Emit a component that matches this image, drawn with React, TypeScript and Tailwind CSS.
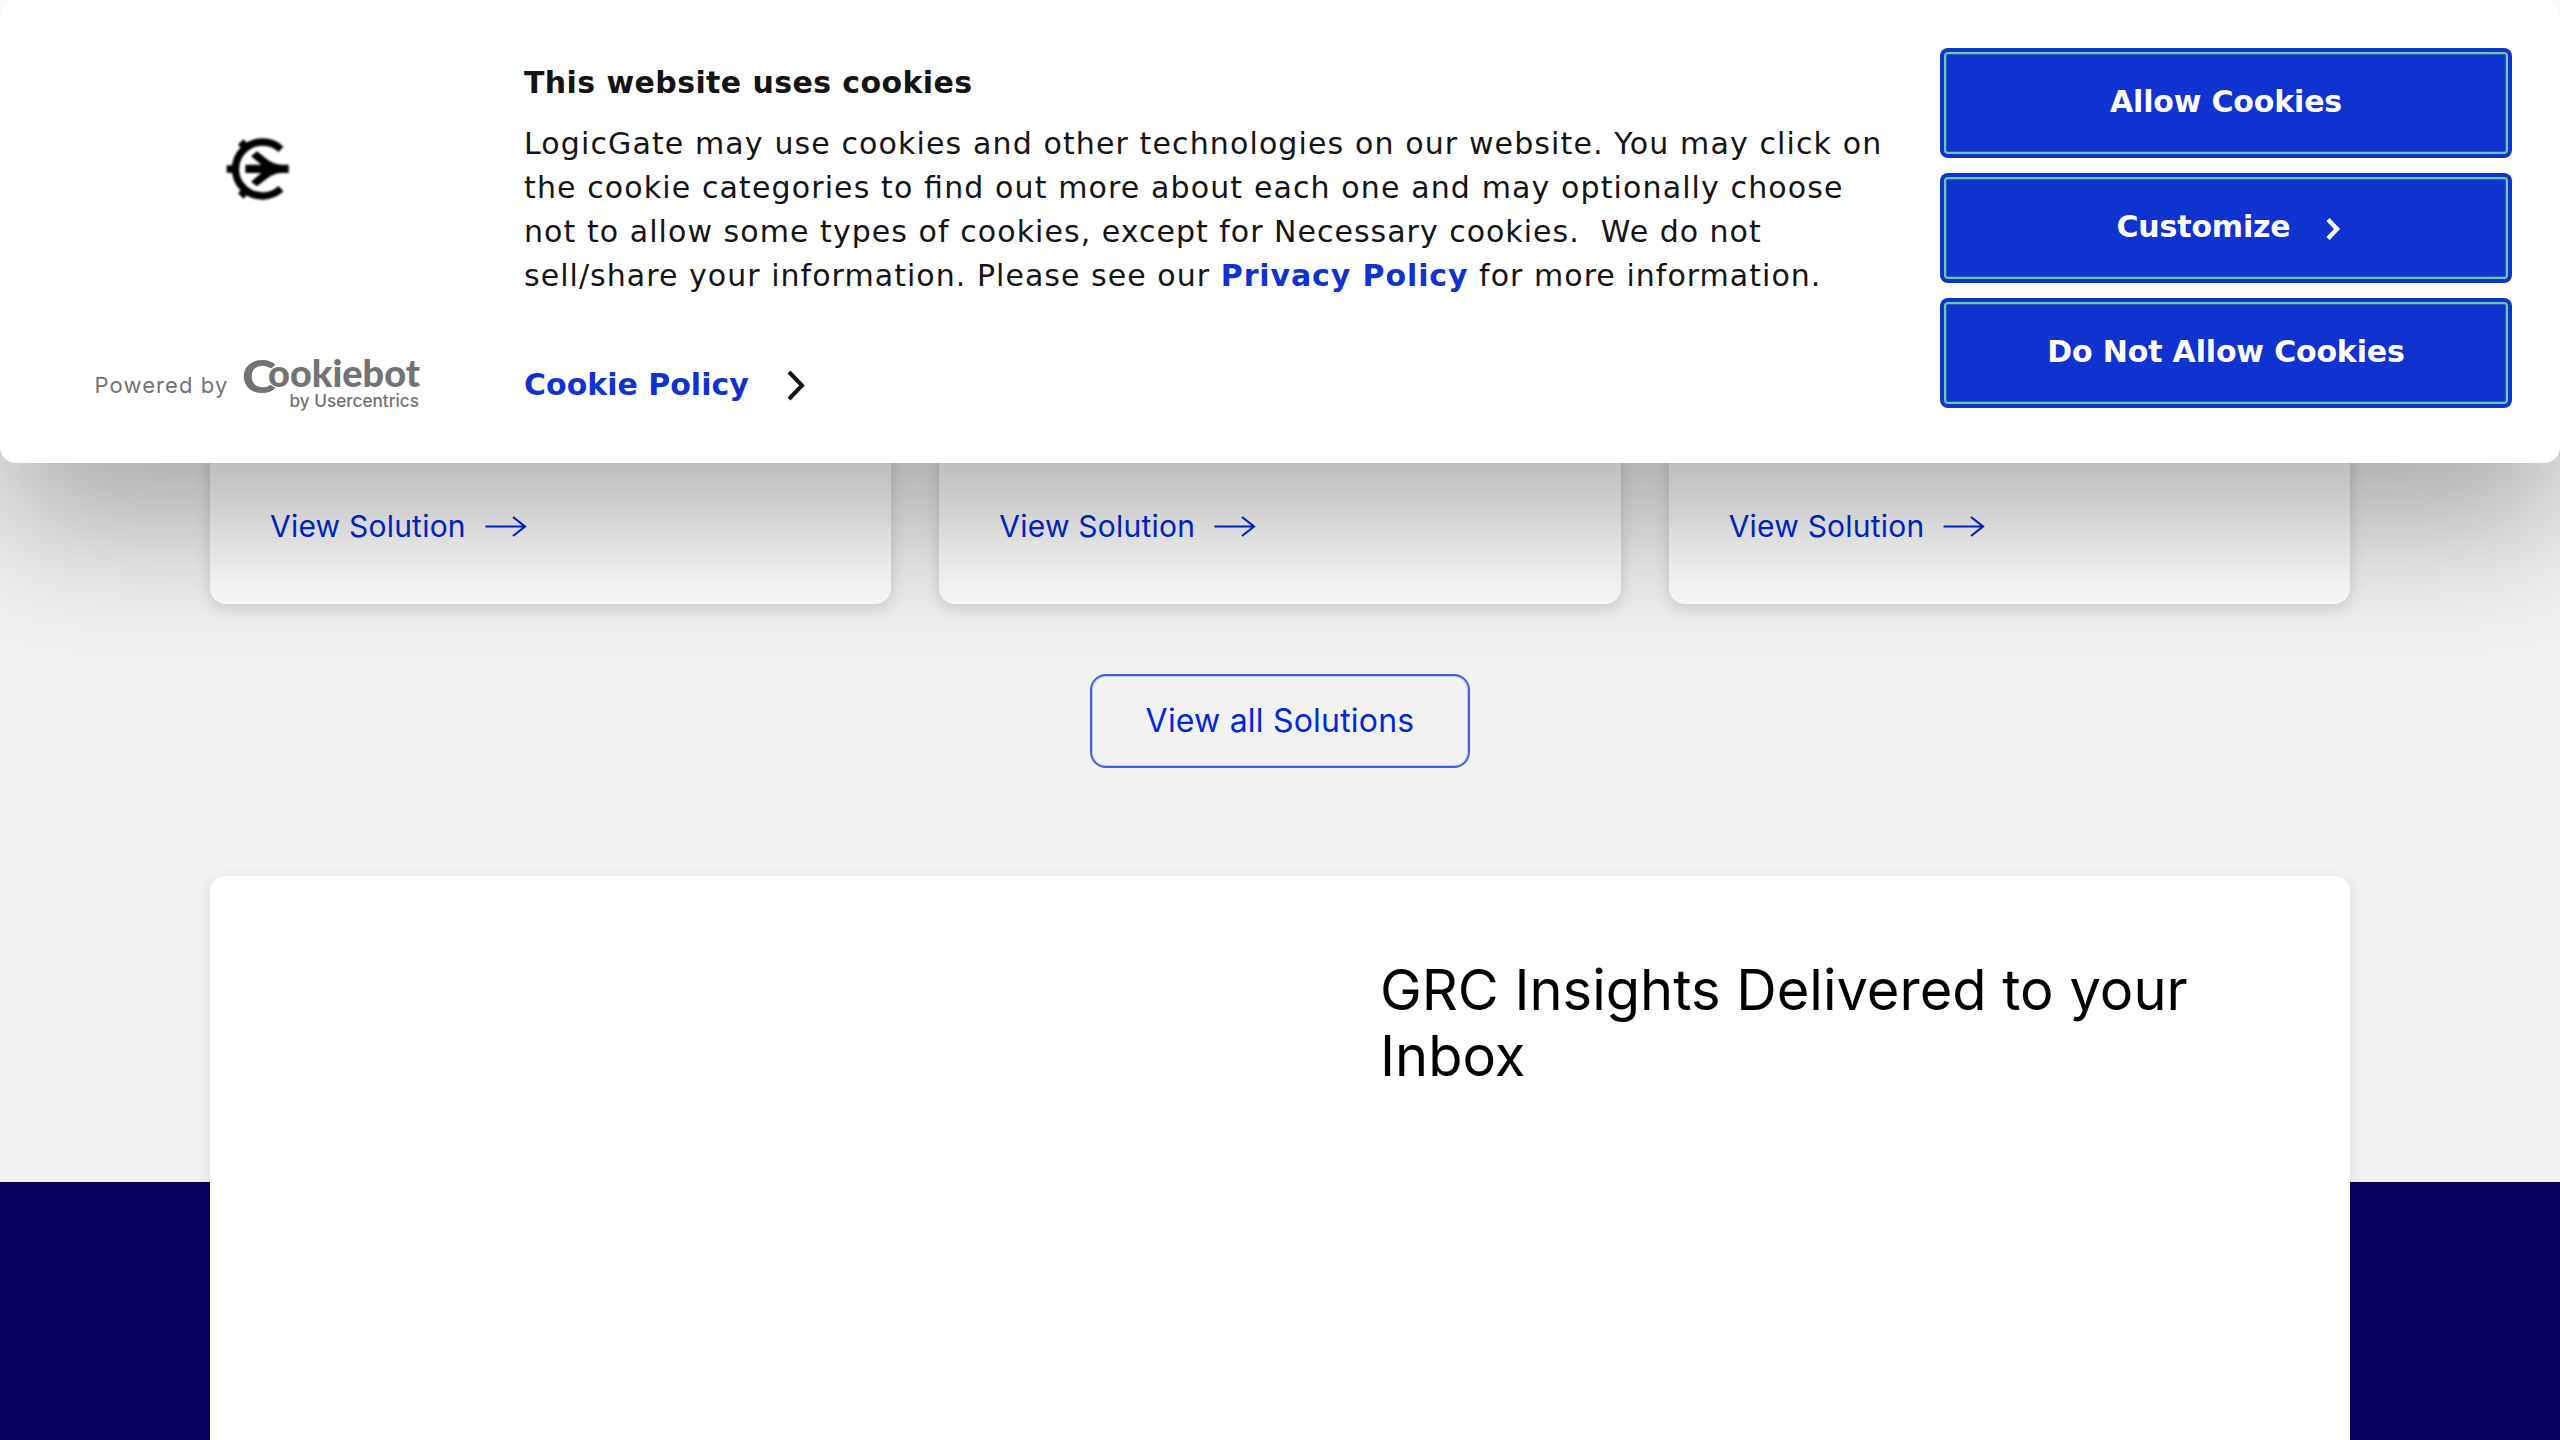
import React from "react";

function LogicGateMark() {
  return (
    <svg className="h-[100px] w-[120px] blur-[1px]" viewBox="0 0 360 300" fill="none">
      <path d="M243 88 A81 81 0 1 0 243 206" stroke="#000" strokeWidth="22" />
      <path d="M80 147H104M122 66L136 80M122 228L136 214" stroke="#000" strokeWidth="23" />
      <path
        d="M171 94L200 117Q222 134 245 134H266V159H245Q222 159 200 176L171 199L153 185L184 159H136V134H184L153 109Z"
        fill="#000"
      />
    </svg>
  );
}

function CookiebotLogo() {
  return (
    <svg className="h-[60px] w-[184px] overflow-visible" viewBox="0 0 184 60" fill="#737373">
      <text x="0" y="42.5" fontFamily="Lato, sans-serif" fontWeight="900" fontSize="46" textLength="34" lengthAdjust="spacingAndGlyphs">
        C
      </text>
      <text
        x="26"
        y="37"
        fontFamily="Lato, sans-serif"
        fontWeight="900"
        fontSize="37.5"
        textLength="152"
        lengthAdjust="spacingAndGlyphs"
        stroke="#fff"
        strokeWidth="2"
        paintOrder="stroke"
      >
        ookiebot
      </text>
      <text x="47.5" y="57" fontFamily="Inter, sans-serif" fontWeight="500" fontSize="17.3" textLength="129.5" lengthAdjust="spacingAndGlyphs">
        by Usercentrics
      </text>
    </svg>
  );
}

function BannerButton({ label, chevron = false }: { label: string; chevron?: boolean }) {
  return (
    <button className="h-[110px] w-[572px] rounded-[8px] bg-[#1032cf] p-1">
      <span className="flex h-full w-full items-center justify-center rounded-[4px] border-2 border-[#69cc9f] pb-[3px] text-[30px] leading-[44px] font-bold tracking-[-0.17px] text-white shadow-[inset_0_0_0_1px_#2a54c8]">
        {label}
        {chevron && (
          <svg className="mt-[4px] -mr-[5px] ml-[34px] h-6 w-4" viewBox="0 0 16 24" fill="none">
            <path d="M3 2.5L12 12L3 21.5" stroke="#fff" strokeWidth="4.4" />
          </svg>
        )}
      </span>
    </button>
  );
}

function CookieBanner() {
  return (
    <div className="absolute inset-x-0 top-0 flex h-[463px] rounded-[16px] bg-white font-['DejaVu_Sans',sans-serif] text-[#141414] shadow-[0_64px_136px_rgba(0,0,0,0.3)]">
      <div className="flex w-[524px] flex-col pt-[120px]">
        <div className="pl-[200px]">
          <LogicGateMark />
        </div>
        <div className="mt-[130px] flex h-[60px] pl-[94.5px] text-[#737373]">
          <span className="w-[147.5px] pt-[15px] font-[Inter,sans-serif] text-[22px] leading-[40px] tracking-[1.1px]">Powered by</span>
          <CookiebotLogo />
        </div>
      </div>
      <div className="w-[1416px] pt-[61px]">
        <h2 className="text-[30px] leading-[44px] font-bold tracking-[0.4px]">This website uses cookies</h2>
        <p className="mt-[17px] text-[30px] leading-[44px] tracking-[1.12px] whitespace-nowrap [font-feature-settings:'liga'_1]">
          LogicGate may use cookies and other technologies on our website. You may click on
          <br />
          the cookie categories to find out more about each one and may optionally choose
          <br />
          <span className="tracking-[1.06px]">not to allow some types of cookies,</span>
          <span className="tracking-[1px]"> except for Necessary cookies.&nbsp; We do not</span>
          <br />
          <span className="tracking-[1.04px]">sell/share your information. Please see our </span>
          <a className="font-bold tracking-[0.9px] text-[#1032cf]">Privacy Policy</a>
          <span className="tracking-[1.03px]"> for more information.</span>
        </p>
        <div className="mt-[65px] flex items-center">
          <a className="text-[30px] leading-[44px] font-bold text-[#1032cf]">Cookie Policy</a>
          <svg className="-mt-px ml-[37px] h-8 w-5" viewBox="0 0 20 32" fill="none">
            <path d="M3 3L16 16.5L3 30" stroke="#141414" strokeWidth="4" />
          </svg>
        </div>
      </div>
      <div className="flex flex-col gap-[15px] pt-12">
        <BannerButton label="Allow Cookies" />
        <BannerButton label="Customize" chevron />
        <BannerButton label="Do Not Allow Cookies" />
      </div>
    </div>
  );
}

function SolutionCard() {
  return (
    <div className="flex flex-1 items-end rounded-[16px] bg-white px-[60px] pb-[56px] shadow-[0_4px_16px_rgba(0,0,0,0.15)]">
      <a className="flex items-center text-[30px] leading-[44px] tracking-[0.22px] text-[#0028dc]">
        View Solution
        <svg className="ml-[19px] h-6 w-[44px]" viewBox="0 0 44 24" fill="none" stroke="#0028dc" strokeWidth="2.2">
          <path d="M0.5 12.5H40M28 3L40 12.5L28 22" />
        </svg>
      </a>
    </div>
  );
}

export default function App() {
  return (
    <div className="relative flex h-[1440px] w-full flex-col overflow-hidden bg-[#f2f2f2] font-[Inter,sans-serif]">
      <div className="h-10 bg-white" />
      <section className="flex h-[564px] gap-12 px-[210px]">
        <SolutionCard />
        <SolutionCard />
        <SolutionCard />
      </section>
      <div className="flex h-[578px] justify-center pt-[70px]">
        <button className="h-[94px] w-[380px] rounded-[16px] border-2 border-[#3f5ee2] text-[32px] tracking-[0.2px] text-[#0028dc] shadow-[inset_0_0_0_1px_#c6cef0]">
          View all Solutions
        </button>
      </div>
      <section className="h-[258px] bg-[#06045e] px-[210px]">
        <div className="-mt-[306px] h-[564px] rounded-t-[16px] bg-white pt-[81px] pl-[1170px] shadow-[0_4px_16px_rgba(0,0,0,0.1)]">
          <h1 className="w-[860px] text-[56px] leading-[66px] text-black">GRC Insights Delivered to your Inbox</h1>
        </div>
      </section>
      <CookieBanner />
    </div>
  );
}
